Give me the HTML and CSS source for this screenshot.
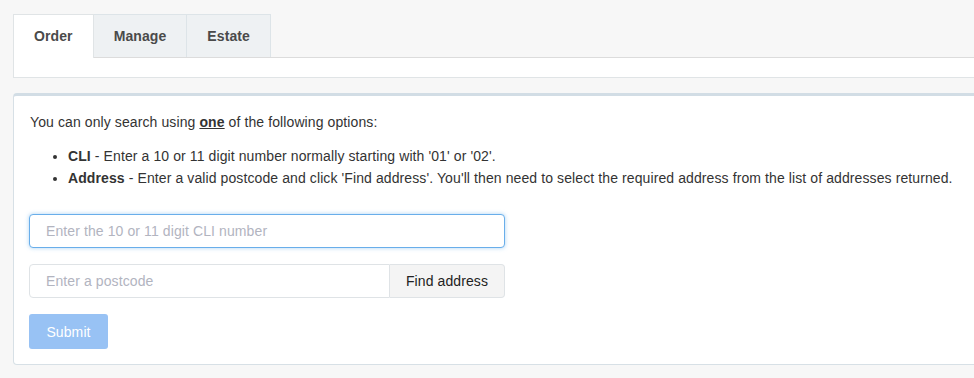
FILE: index.html
```html
<!DOCTYPE html>
<html lang="en">
<head>
    <meta charset="UTF-8">
    <meta name="viewport" content="width=device-width, initial-scale=1.0">
    <title>Order lookup</title>
    <link rel="stylesheet" href="styles.css">
</head>
<body>

    <!-- Tab navigation -->
    <div class="tabs-box">
        <ul class="tabs">
            <li class="tab active">Order</li>
            <li class="tab">Manage</li>
            <li class="tab">Estate</li>
        </ul>
        <div class="tabs-body"></div>
    </div>

    <!-- Search panel -->
    <section class="panel">
        <p class="intro">You can only search using <strong><u>one</u></strong> of the following options:</p>
        <ul class="options">
            <li><strong>CLI</strong> - Enter a 10 or 11 digit number normally starting with '01' or '02'.</li>
            <li><strong>Address</strong> - Enter a valid postcode and click 'Find address'. You'll then need to select the required address from the list of addresses returned.</li>
        </ul>

        <form class="search-form">
            <input type="text" class="field field-focus" placeholder="Enter the 10 or 11 digit CLI number" autofocus>
            <div class="input-group">
                <input type="text" class="field" placeholder="Enter a postcode">
                <button type="button" class="addon-button">Find address</button>
            </div>
            <button type="button" class="submit-button" disabled>Submit</button>
        </form>
    </section>

</body>
</html>
```

FILE: styles.css
```css
/* Base */
body, html {
    margin: 0;
    padding: 0;
    background: #f7f7f7;
    color: #333;
    font-family: 'Liberation Sans', Arial, sans-serif;
    font-size: 14px;
    letter-spacing: 0.1px;
    overflow: hidden;
}

body {
    padding: 14px 0 0 13px;
    width: 1000px;
}

/* Tabs */
.tabs-box {
    border-left: 1px solid #e0e4e6;
    border-bottom: 1px solid #e0e4e6;
}

.tabs {
    list-style: none;
    margin: 0;
    padding: 0;
    display: flex;
    border-bottom: 1px solid #dcdcdc;
    margin-left: -1px;
}

.tab {
    padding: 0 20px;
    height: 42px;
    line-height: 42px;
    font-weight: bold;
    color: #4a4a4a;
    background: #eef1f3;
    border: 1px solid #dde4e8;
    border-bottom: none;
    margin-bottom: -1px;
    margin-left: -1px;
}

.tab:first-child {
    margin-left: 0;
}

.tab.active {
    background: #fff;
    border-color: #e0e4e6;
    height: 43px;
    position: relative;
    z-index: 1;
}

.tabs-body {
    height: 19px;
    background: #fff;
}

/* Panel */
.panel {
    margin-top: 15px;
    background: #fff;
    border: 1px solid #d7e0e6;
    border-top: 3px solid #d2dde5;
    border-radius: 4px 0 0 4px;
    padding: 15px;
    line-height: 22px;
}

.intro {
    margin: 0 0 12px 1px;
}

.options {
    margin: 0 0 25px;
    padding-left: 39px;
}

/* Form */
.search-form {
    display: flex;
    flex-direction: column;
    gap: 16px;
    width: 476px;
}

.field {
    box-sizing: border-box;
    height: 34px;
    padding: 0 16px;
    font-family: inherit;
    font-size: 14px;
    letter-spacing: inherit;
    color: #333;
    border: 1px solid #dfe3e6;
    border-radius: 4px;
    background: #fff;
    outline: none;
}

.field::placeholder {
    color: #b2b4bf;
}

.field-focus {
    border-color: #69aeea;
    box-shadow: 0 0 4px rgba(102, 175, 233, 0.55);
    caret-color: #2b2b4a;
}

.input-group {
    display: flex;
}

.input-group .field {
    flex: 1;
    border-radius: 4px 0 0 4px;
}

.addon-button {
    width: 115px;
    height: 34px;
    font-family: inherit;
    font-size: 14px;
    letter-spacing: inherit;
    color: #222;
    background: #f4f4f4;
    border: 1px solid #dfe3e6;
    border-left: none;
    border-radius: 0 4px 4px 0;
}

.submit-button {
    align-self: flex-start;
    width: 79px;
    height: 35px;
    font-family: inherit;
    font-size: 14px;
    letter-spacing: inherit;
    color: #fff;
    background: #98c2f4;
    border: none;
    border-radius: 3px;
}
```
